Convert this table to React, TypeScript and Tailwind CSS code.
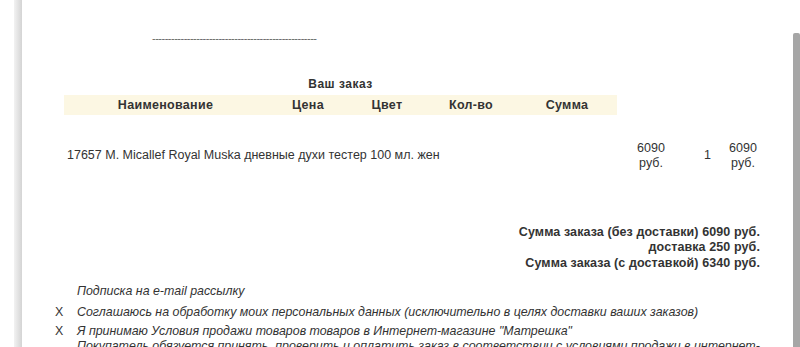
export default function App() {
  const font = { fontFamily: '"Liberation Sans", Arial, sans-serif' };
  return (
    <div
      className="w-[800px] h-[347px] overflow-hidden bg-white flex text-[#333]"
      style={font}
    >
      {/* left frame edge */}
      <div className="ml-[14px] w-[8px] bg-gradient-to-r from-[#f2f2f2] to-[#d4d4d4]" />

      <div className="flex-1 flex flex-col">
        {/* separator made of dashes */}
        <div className="mt-[31px] ml-[130px] text-[11px] leading-[14px] text-[#666] tracking-[-0.5px]">
          ----------------------------------------------------
        </div>

        <div className="mt-[32px] w-[553px] ml-[42px] text-center font-bold text-[12px] leading-[14px] tracking-[0.5px] text-[#333]">
          Ваш заказ
        </div>

        {/* header */}
        <div className="mt-[4px] ml-[42px] w-[553px] h-[20px] flex bg-[#fcf7e3] font-bold text-[12.5px] tracking-[0.3px] text-[#333] gap-px">
          <div className="w-[203px] flex items-center justify-center pt-px">Наименование</div>
          <div className="w-[80px] flex items-center justify-center pt-px">Цена</div>
          <div className="w-[76px] flex items-center justify-center pt-px">Цвет</div>
          <div className="w-[90px] flex items-center justify-center pt-px">Кол-во</div>
          <div className="flex-1 flex items-center justify-center pt-px">Сумма</div>
        </div>

        {/* product row */}
        <div className="mt-[26px] ml-[42px] w-[696px] flex items-center text-[12.5px] leading-[15px] text-[#333]">
          <div className="flex-1 pl-[3px]">
            17657 M. Micallef Royal Muska дневные духи тестер 100 мл. жен
          </div>
          <div className="w-[34px] text-center">
            6090
            <br />
            руб.
          </div>
          <div className="w-[58px] text-right pr-[15px]">1</div>
          <div className="w-[34px] text-center">
            6090
            <br />
            руб.
          </div>
        </div>

        <div className="mt-[26px] ml-[42px] w-[696px] h-px bg-[#e6e6e6]" />

        {/* totals */}
        <div className="mt-[28px] ml-[42px] w-[696px] text-right font-bold text-[12.5px] tracking-[0.1px] leading-[15.5px] text-[#333]">
          <div>Сумма заказа (без доставки) 6090 руб.</div>
          <div>доставка 250 руб.</div>
          <div>Сумма заказа (с доставкой) 6340 руб.</div>
        </div>

        {/* agreements */}
        <div className="mt-[10px] ml-[33px] text-[12.4px] italic text-[#333]">
          <div className="flex leading-[21px]">
            <span className="w-[22px]" />
            <span>Подписка на e-mail рассылку</span>
          </div>
          <div className="flex leading-[20px]">
            <span className="w-[22px] not-italic">X</span>
            <span>
              Соглашаюсь на обработку моих персональных данных (исключительно в
              целях доставки ваших заказов)
            </span>
          </div>
          <div className="flex leading-[15px] mt-[2px]">
            <span className="w-[22px] not-italic shrink-0">X</span>
            <span>
              Я принимаю Условия продажи товаров товаров в Интернет-магазине
              "Матрешка"
              <br />
              Покупатель обязуется принять, проверить и оплатить заказ в
              соответствии с условиями продажи в интернет-магазине
            </span>
          </div>
        </div>
      </div>

      {/* right scrollbar edge */}
      <div className="w-[7px] pt-[33px] flex flex-col">
        <div className="flex-1 bg-[#a6a6a6] rounded-t-[2px]" />
      </div>
    </div>
  );
}
